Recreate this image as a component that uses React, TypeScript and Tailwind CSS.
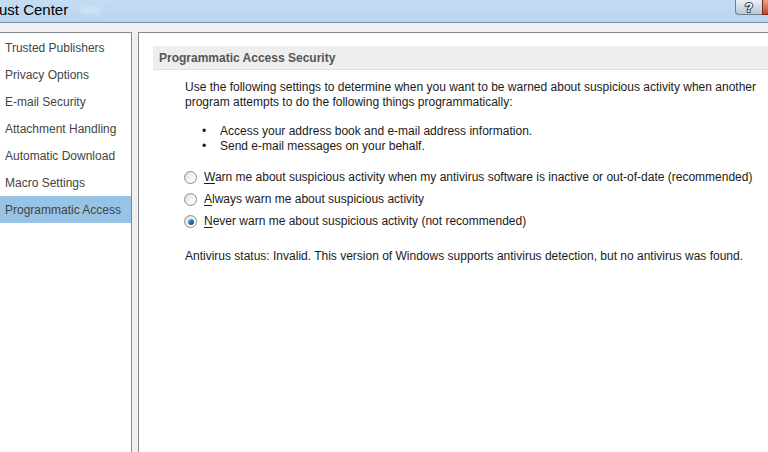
const navItems = [
  "Trusted Publishers",
  "Privacy Options",
  "E-mail Security",
  "Attachment Handling",
  "Automatic Download",
  "Macro Settings",
  "Programmatic Access",
];

const radios = [
  { key: "W", rest: "arn me about suspicious activity when my antivirus software is inactive or out-of-date (recommended)", checked: false },
  { key: "A", rest: "lways warn me about suspicious activity", checked: false },
  { key: "N", rest: "ever warn me about suspicious activity (not recommended)", checked: true },
];

const Radio = ({ checked }: { checked: boolean }) => (
  <span className="flex h-[13px] w-[13px] shrink-0 items-center justify-center rounded-full border border-[#8c8c8c] bg-gradient-to-br from-[#d8d8d8] via-[#f4f4f4] to-white">
    {checked && (
      <span className="h-[6px] w-[6px] rounded-full bg-gradient-to-br from-[#8fd0f5] via-[#1f74bf] to-[#0b3f7a]" />
    )}
  </span>
);

const App = () => {
  return (
    <div className="flex h-[452px] w-[768px] flex-col overflow-hidden bg-[#f0f0f0] font-['Segoe_UI','Liberation_Sans',sans-serif] text-[12px]">
      {/* Title bar */}
      <div className="flex h-[23px] shrink-0 items-start justify-between border-b border-[#7a8ea6] bg-gradient-to-b from-[#c4ddf4] to-[#b9d4ee]">
        <div className="flex items-center gap-3">
          <span className="-ml-[1px] text-[15px] leading-[20px] text-black">ust Center</span>
          <span className="h-[8px] w-[22px] rounded-full bg-[#cfe2f5] blur-[2px]" />
        </div>
        <div className="flex">
          <div className="flex h-[15px] w-[27px] items-center justify-center rounded-bl-[4px] border-b border-l border-[#6f7f93] bg-gradient-to-b from-[#e9f0f7] to-[#b8c7d8] text-[13px] font-bold leading-none text-white [-webkit-text-stroke:2px_#3b4a5c] [paint-order:stroke_fill]">
            ?
          </div>
          <div className="h-[15px] w-[6px] border-b border-l border-[#7a2b1e] bg-gradient-to-b from-[#e8a28f] to-[#c2412b]" />
        </div>
      </div>

      {/* Panels */}
      <div className="mt-[9px] flex min-h-0 flex-1 gap-[6px]">
        <div className="w-[132px] shrink-0 border-r border-t border-[#828790] bg-white pt-[1px]">
          {navItems.map((item) => (
            <div
              key={item}
              className={`flex h-[27px] items-center pl-[5px] text-[#444] ${
                item === "Programmatic Access" ? "bg-[#98c3e4]" : ""
              }`}
            >
              {item}
            </div>
          ))}
        </div>

        <div className="flex-1 border-l border-t border-[#828790] bg-white pl-[14px] pt-[13px] text-[#1b1b1b]">
          <div className="flex h-[24px] items-center border-b border-[#e2e2e2] bg-[#eeeeee] pl-[6px] font-bold text-[#555]">
            Programmatic Access Security
          </div>

          <div className="pl-[32px] pt-[10px] leading-[15px]">
            <p>
              Use the following settings to determine when you want to be warned about suspicious activity when another
              <br />
              program attempts to do the following things programmatically:
            </p>

            <ul className="mt-[14px]">
              <li className="flex">
                <span className="w-[35px] pl-[17px]">•</span>Access your address book and e-mail address information.
              </li>
              <li className="flex">
                <span className="w-[35px] pl-[17px]">•</span>Send e-mail messages on your behalf.
              </li>
            </ul>

            <div className="mt-[16px] -ml-[1px] flex flex-col gap-[7px]">
              {radios.map((r) => (
                <label key={r.key} className="flex items-center gap-[7px]">
                  <Radio checked={r.checked} />
                  <span>
                    <span className="underline underline-offset-2">{r.key}</span>
                    {r.rest}
                  </span>
                </label>
              ))}
            </div>

            <p className="mt-[20px]">
              Antivirus status: Invalid. This version of Windows supports antivirus detection, but no antivirus was found.
            </p>
          </div>
        </div>
      </div>
    </div>
  );
};

export default App;
